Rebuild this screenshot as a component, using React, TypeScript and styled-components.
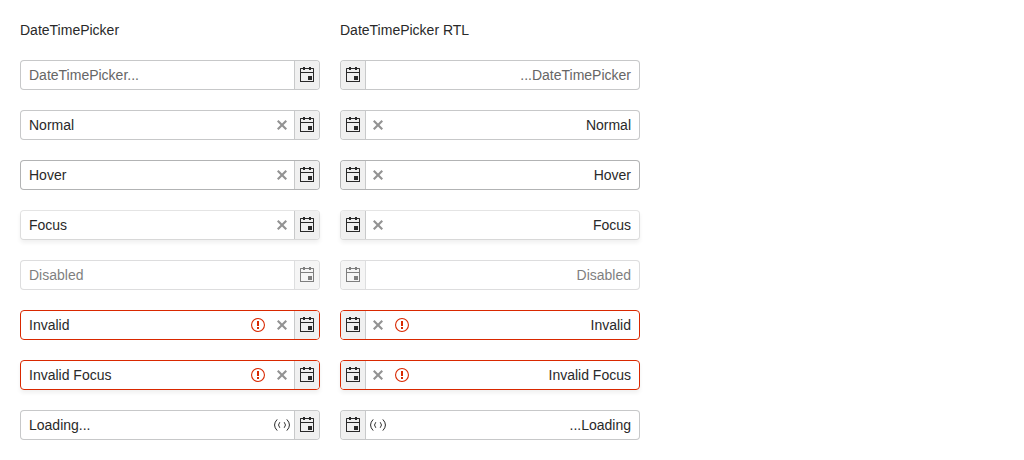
import React from 'react';
import styled, { createGlobalStyle, css } from 'styled-components';

type State = 'normal' | 'hover' | 'focus' | 'disabled' | 'invalid' | 'invalidFocus';

const borders: Record<State, string> = {
  normal: 'rgba(33, 37, 41, 0.25)',
  hover: 'rgba(33, 37, 41, 0.35)',
  focus: 'rgba(0, 0, 0, 0.1)',
  disabled: 'rgba(33, 37, 41, 0.25)',
  invalid: '#d92800',
  invalidFocus: '#d92800',
};

const GlobalStyle = createGlobalStyle`
  body {
    margin: 0;
    background: #fff;
    color: #292929;
    font: 14px/20px "Liberation Sans", Arial, sans-serif;
  }
`;

const Grid = styled.main`
  display: grid;
  grid-template-columns: 300px 300px;
  gap: 20px;
  padding: 20px;
`;

const Heading = styled.span`
  height: 20px;
`;

const Picker = styled.div<{ $state: State }>`
  display: flex;
  box-sizing: border-box;
  height: 30px;
  border: 1px solid ${(p) => borders[p.$state]};
  border-radius: 4px;
  overflow: hidden;
  background: #fff;
  background-clip: padding-box;
  ${(p) =>
    (p.$state === 'focus' || p.$state === 'invalidFocus') &&
    css`
      box-shadow: 0 3px 4px 0 rgba(0, 0, 0, 0.06);
    `}
  ${(p) =>
    p.$state === 'disabled' &&
    css`
      opacity: 0.6;
    `}
`;

const Value = styled.span<{ $placeholder?: boolean }>`
  flex: 1;
  padding: 4px 8px;
  white-space: nowrap;
  color: ${(p) => (p.$placeholder ? '#666' : 'inherit')};
`;

const Adornment = styled.span<{ $color?: string; $opacity?: number }>`
  display: flex;
  align-items: center;
  justify-content: center;
  width: 24px;
  color: ${(p) => p.$color ?? 'inherit'};
  opacity: ${(p) => p.$opacity ?? 1};
`;

const PickerButton = styled.span`
  display: flex;
  align-items: center;
  justify-content: center;
  width: 24px;
  background: #f0f0f0;
  border-inline-start: 1px solid #c8c9ca;
`;

const Icon = styled.svg.attrs({ viewBox: '0 0 16 16', width: 16, height: 16 })`
  display: block;
  fill: currentColor;
`;

const CalendarIcon = () => (
  <Icon>
    <path
      fillRule="evenodd"
      d="M4 0h2v1h4V0h2v1h2.5a.5.5 0 0 1 .5.5v13a.5.5 0 0 1-.5.5h-13a.5.5 0 0 1-.5-.5v-13a.5.5 0 0 1 .5-.5H4zM2 2v3h12V2h-2v1h-2V2H6v1H4V2zM2 6v8h12V6zM9 9h4v4H9z"
    />
  </Icon>
);

const ClearIcon = () => (
  <Icon>
    <path d="M13 4.5 11.5 3 8 6.5 4.5 3 3 4.5 6.5 8 3 11.5 4.5 13 8 9.5l3.5 3.5 1.5-1.5L9.5 8z" />
  </Icon>
);

const WarningIcon = () => (
  <Icon>
    <path
      fillRule="evenodd"
      d="M8 1a7 7 0 1 1 0 14A7 7 0 0 1 8 1zm0 1.1a5.9 5.9 0 1 0 0 11.8A5.9 5.9 0 0 0 8 2.1zM7 4h2v5H7zM7 10h2v2H7z"
    />
  </Icon>
);

const LoadingIcon = () => (
  <Icon>
    <g fill="none" stroke="currentColor">
      <path d="M3.2 2.4Q-2.1 8 3.2 13.6M12.8 2.4Q18.1 8 12.8 13.6" />
      <path strokeWidth="0.95" d="M5.8 5.2Q3.2 8 5.8 10.8M10.2 5.2Q12.8 8 10.2 10.8" />
    </g>
  </Icon>
);

interface Row {
  text: string;
  state?: State;
  placeholder?: boolean;
  clear?: boolean;
  loading?: boolean;
}

const rows: Row[] = [
  { text: 'DateTimePicker...', placeholder: true },
  { text: 'Normal', clear: true },
  { text: 'Hover', state: 'hover', clear: true },
  { text: 'Focus', state: 'focus', clear: true },
  { text: 'Disabled', state: 'disabled' },
  { text: 'Invalid', state: 'invalid', clear: true },
  { text: 'Invalid Focus', state: 'invalidFocus', clear: true },
  { text: 'Loading...', loading: true },
];

function DateTimePicker({ row, dir }: { row: Row; dir: 'ltr' | 'rtl' }) {
  const state = row.state ?? 'normal';
  return (
    <Picker $state={state} dir={dir}>
      <Value $placeholder={row.placeholder}>{row.text}</Value>
      {state.startsWith('invalid') && (
        <Adornment $color="#d92800">
          <WarningIcon />
        </Adornment>
      )}
      {row.clear && (
        <Adornment $opacity={0.5}>
          <ClearIcon />
        </Adornment>
      )}
      {row.loading && (
        <Adornment>
          <LoadingIcon />
        </Adornment>
      )}
      <PickerButton>
        <CalendarIcon />
      </PickerButton>
    </Picker>
  );
}

export default function App() {
  return (
    <>
      <GlobalStyle />
      <Grid>
        <Heading>DateTimePicker</Heading>
        <Heading>DateTimePicker RTL</Heading>
        {rows.map((row) => (
          <React.Fragment key={row.text}>
            <DateTimePicker row={row} dir="ltr" />
            <DateTimePicker row={row} dir="rtl" />
          </React.Fragment>
        ))}
      </Grid>
    </>
  );
}
